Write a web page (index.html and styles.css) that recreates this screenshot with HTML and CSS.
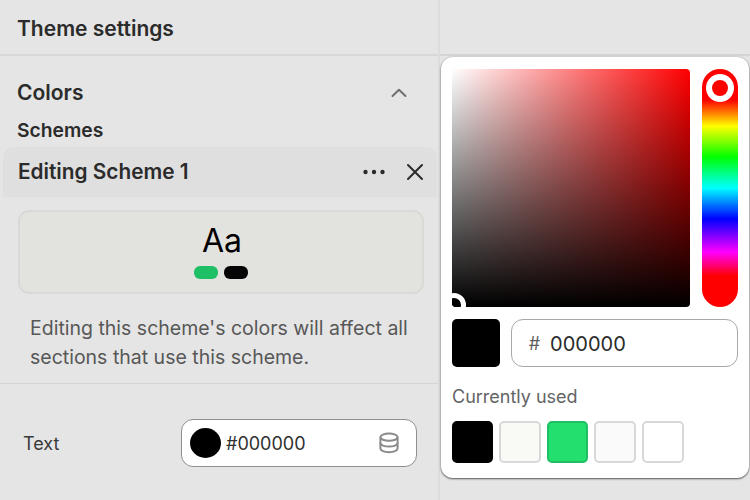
FILE: index.html
```html
<!DOCTYPE html>
<html lang="en">
<head>
<meta charset="utf-8">
<title>Theme settings</title>
<link rel="stylesheet" href="styles.css">
</head>
<body>
<div class="app">
  <aside class="sidebar">
    <header class="top"><h1 class="title">Theme settings</h1></header>
    <div class="colors-row">
      <h2 class="colors">Colors</h2>
      <svg class="chev" width="20" height="20" viewBox="0 0 20 20" fill="none"><path d="M3.5 13 10 6.8 16.5 13" stroke="#6f6f6f" stroke-width="2" stroke-linecap="round" stroke-linejoin="round"/></svg>
    </div>
    <h3 class="schemes">Schemes</h3>
    <div class="editing">
      <span class="editing-title">Editing Scheme 1</span>
      <div class="editing-actions">
        <svg width="24" height="8" viewBox="0 0 24 8"><circle cx="3.5" cy="4" r="2.2" fill="#2b2b2b"/><circle cx="12" cy="4" r="2.2" fill="#2b2b2b"/><circle cx="20.5" cy="4" r="2.2" fill="#2b2b2b"/></svg>
        <svg width="18" height="18" viewBox="0 0 18 18" fill="none"><path d="M2 2 16 16M16 2 2 16" stroke="#2b2b2b" stroke-width="2" stroke-linecap="round"/></svg>
      </div>
    </div>
    <div class="preview">
      <div class="aa">Aa</div>
      <div class="pills"><span class="pill pill-green"></span><span class="pill pill-black"></span></div>
    </div>
    <p class="desc">Editing this scheme's colors will affect all sections that use this scheme.</p>
    <div class="text-row">
      <span class="text-label">Text</span>
      <div class="color-field">
        <span class="dot"></span>
        <span class="field-value">#000000</span>
        <svg class="db" width="22" height="22" viewBox="0 0 22 22" fill="none" stroke="#8a8a8a" stroke-width="2"><ellipse cx="11" cy="5.2" rx="8.6" ry="3.6"/><path d="M2.4 5.2v11.4c0 2 3.9 3.6 8.6 3.6s8.6-1.6 8.6-3.6V5.2"/><path d="M2.4 11c0 2 3.9 3.6 8.6 3.6s8.6-1.6 8.6-3.6"/></svg>
      </div>
    </div>
  </aside>
  <div class="right-top"></div>
</div>

<div class="popover">
  <div class="picker">
    <div class="sv"><span class="sv-thumb"></span></div>
    <div class="hue"><span class="hue-thumb"></span></div>
  </div>
  <div class="hex-row">
    <span class="current"></span>
    <div class="hex-field"><span class="hash">#</span><span class="hex-value">000000</span></div>
  </div>
  <div class="used-label">Currently used</div>
  <div class="swatches">
    <span class="swatch s-black"></span>
    <span class="swatch s-cream"></span>
    <span class="swatch s-green"></span>
    <span class="swatch s-offwhite"></span>
    <span class="swatch s-white"></span>
  </div>
</div>
</body>
</html>
```

FILE: styles.css
```css
* { box-sizing: border-box; }
html, body { margin: 0; padding: 0; }
body {
  width: 750px;
  height: 500px;
  overflow: hidden;
  position: relative;
  background: #e5e5e5;
  font-family: Inter, "Liberation Sans", sans-serif;
  color: #2b2b2b;
}
.app { display: flex; height: 500px; }
.sidebar {
  width: 440px;
  flex: none;
  border-right: 2px solid #dcdcdc;
  display: flex;
  flex-direction: column;
}
.right-top { flex: 1; height: 56px; border-bottom: 2px solid #d4d4d4; }
.top {
  height: 56px;
  border-bottom: 2px solid #d8d8d8;
  padding: 17px 0 0 17px;
}
.title { margin: 0; font-size: 21px; line-height: 24px; font-weight: 600; }
.colors-row {
  display: flex;
  justify-content: space-between;
  align-items: center;
  padding: 24px 29px 0 17px;
}
.colors { margin: 0; font-size: 21px; line-height: 26px; font-weight: 600; }
.schemes { margin: 13px 0 0 17px; font-size: 19.3px; line-height: 22px; font-weight: 600; }
.editing {
  margin: 6px 1px 0 3px;
  height: 50px;
  background: #dfdfdf;
  border-radius: 10px 10px 0 0;
  display: flex;
  align-items: center;
  justify-content: space-between;
  padding: 0 13px 0 15px;
}
.editing-title { font-size: 20.8px; line-height: 24px; font-weight: 600; }
.editing-actions { display: flex; align-items: center; gap: 20px; }
.editing-actions svg { display: block; }
.preview {
  margin: 13px 14px 0 18px;
  height: 84px;
  background: #e2e2de;
  border: 2px solid #d9d9d6;
  border-radius: 11px;
  display: flex;
  flex-direction: column;
  align-items: center;
}
.aa { font-size: 32px; line-height: 38px; margin-top: 10px; margin-left: 2px; color: #000; }
.pills { display: flex; gap: 6px; margin-top: 6px; }
.pill { width: 24px; height: 13px; border-radius: 6px; }
.pill-green { background: #1fc065; }
.pill-black { background: #050505; }
.desc {
  margin: 20px 0 0;
  padding: 0 20px 11px 30px;
  font-size: 19.5px;
  line-height: 29px;
  color: #575757;
  border-bottom: 1px solid #d4d4d4;
}
.text-row {
  display: flex;
  align-items: center;
  justify-content: space-between;
  padding: 35px 21px 0 23px;
}
.text-label { font-size: 18px; color: #3a3a3a; }
.color-field {
  width: 236px;
  height: 48px;
  background: #fff;
  border: 1px solid #8f8f8f;
  border-radius: 12px;
  display: flex;
  align-items: center;
  padding: 0 16px 0 8px;
}
.dot { width: 31px; height: 30px; border-radius: 50%; background: #000; flex: none; }
.field-value { margin-left: 5px; font-size: 18px; color: #303030; flex: 1; }
.db { display: block; }
.popover {
  position: absolute;
  left: 441px;
  top: 57px;
  width: 308px;
  height: 421px;
  background: #fff;
  border-radius: 12px;
  box-shadow: 0 1px 2px rgba(0, 0, 0, 0.6), 0 0 2px rgba(0, 0, 0, 0.2);
  padding: 12px 11px 0;
}
.picker { display: flex; justify-content: space-between; }
.sv {
  position: relative;
  width: 238px;
  height: 238px;
  border-radius: 4px;
  overflow: hidden;
  background:
    linear-gradient(to bottom, rgba(0, 0, 0, 0), #000),
    linear-gradient(to right, #fff, #f00);
}
.sv-thumb {
  position: absolute;
  left: -10px;
  bottom: -10px;
  width: 24px;
  height: 24px;
  border-radius: 50%;
  border: 5px solid #fff;
  background: #000;
}
.hue {
  position: relative;
  width: 36px;
  height: 238px;
  border-radius: 18px;
  background: linear-gradient(to bottom, #f00 13%, #ff0 24%, #0f0 37%, #0ff 50%, #00f 63%, #f0f 77%, #f00 87%);
}
.hue-thumb {
  position: absolute;
  left: 4px;
  top: 5px;
  width: 28px;
  height: 28px;
  border-radius: 50%;
  border: 6px solid #fff;
  background: #f00;
}
.hex-row { display: flex; gap: 11px; margin-top: 12px; }
.current { width: 48px; height: 48px; border-radius: 5px; background: #000; flex: none; margin-left: -0.3px; }
.hex-field {
  width: 227px;
  height: 48px;
  border: 1px solid #a8a8a8;
  border-radius: 12px;
  display: flex;
  align-items: center;
  padding-left: 17px;
  font-size: 20px;
}
.hash { color: #5f5f5f; font-size: 18px; }
.hex-value { margin-left: 10px; color: #2b2b2b; position: relative; top: 0.5px; }
.used-label { margin-top: 19px; font-size: 18px; line-height: 22px; color: #646464; }
.swatches { display: flex; gap: 6px; margin: 13px 0 0 -0.3px; }
.swatch { width: 41.6px; height: 42px; border-radius: 5px; border: 2px solid #d8d8d8; }
.s-black { background: #000; border-color: #000; }
.s-cream { background: #f9f9f5; }
.s-green { background: #22df6e; border-color: #1fc065; }
.s-offwhite { background: #fafafa; }
.s-white { background: #fff; }
```
